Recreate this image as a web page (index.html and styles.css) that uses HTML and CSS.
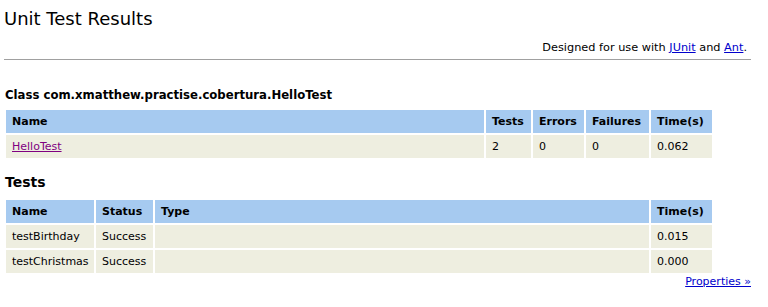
FILE: index.html
```html
<!DOCTYPE html>
<html lang="en">
<head>
    <meta charset="UTF-8">
    <title>Unit Test Results.</title>
    <link rel="stylesheet" href="styles.css">
</head>
<body>

<!-- page title and credits -->
<h1>Unit Test Results</h1>
<div class="credits">
    Designed for use with <a href="#">JUnit</a> and <a href="#">Ant</a>.
</div>
<hr>

<!-- summary for the class -->
<h3>Class com.xmatthew.practise.cobertura.HelloTest</h3>
<table class="details summary">
    <tr>
        <th>Name</th>
        <th class="col-tests">Tests</th>
        <th class="col-errors">Errors</th>
        <th class="col-failures">Failures</th>
        <th class="col-time">Time(s)</th>
    </tr>
    <tr>
        <td><a class="visited" href="#">HelloTest</a></td>
        <td>2</td>
        <td>0</td>
        <td>0</td>
        <td>0.062</td>
    </tr>
</table>

<!-- single test cases -->
<h2>Tests</h2>
<table class="details cases">
    <tr>
        <th class="col-name">Name</th>
        <th class="col-status">Status</th>
        <th>Type</th>
        <th class="col-time">Time(s)</th>
    </tr>
    <tr>
        <td>testBirthday</td>
        <td>Success</td>
        <td></td>
        <td>0.015</td>
    </tr>
    <tr>
        <td>testChristmas</td>
        <td>Success</td>
        <td></td>
        <td>0.000</td>
    </tr>
</table>
<div class="properties">
    <a href="#">Properties &raquo;</a>
</div>

</body>
</html>
```

FILE: styles.css
```css
body {
    margin: 0;
    padding: 0 0 0 4px;
    width: 747px;
    font: normal 11px/13px "DejaVu Sans", Verdana, sans-serif;
    color: #000000;
    background: #ffffff;
}

a {
    color: #0000cc;
}

a.visited {
    color: #800080;
}

h1 {
    margin: 9px 0 0;
    font: normal 18px/20px "DejaVu Sans", Verdana, sans-serif;
}

h2 {
    margin: 13px 0 0 1px;
    font: bold 14px/18px "DejaVu Sans", Verdana, sans-serif;
}

h3 {
    margin: 28px 0 0 1px;
    font: bold 11.7px/15px "DejaVu Sans", Verdana, sans-serif;
}

.credits {
    margin-top: 12px;
    padding-right: 4px;
    text-align: right;
    font-size: 11.3px;
}

hr {
    margin: 5px 0 0;
    border: none;
    border-top: 1px solid #a0a0a0;
    height: 0;
}

/* result tables */
table.details {
    width: 710px;
    table-layout: fixed;
    border-spacing: 2px;
    border-collapse: separate;
}

table.summary {
    margin-top: 5px;
}

table.cases {
    margin-top: 7px;
}

table.details th,
table.details td {
    box-sizing: border-box;
    padding: 5px 5px 5px 6px;
    height: 23px;
    font-size: 11px;
    line-height: 13px;
    text-align: left;
    white-space: nowrap;
}

table.details th {
    font-weight: bold;
    background: #a6caf0;
}

table.details td {
    background: #eeeee0;
}

.col-tests { width: 45px; }
.col-errors { width: 51px; }
.col-failures { width: 63px; }
.col-time { width: 61px; }
.col-name { width: 88px; }
.col-status { width: 57px; }

.properties {
    text-align: right;
}
```
